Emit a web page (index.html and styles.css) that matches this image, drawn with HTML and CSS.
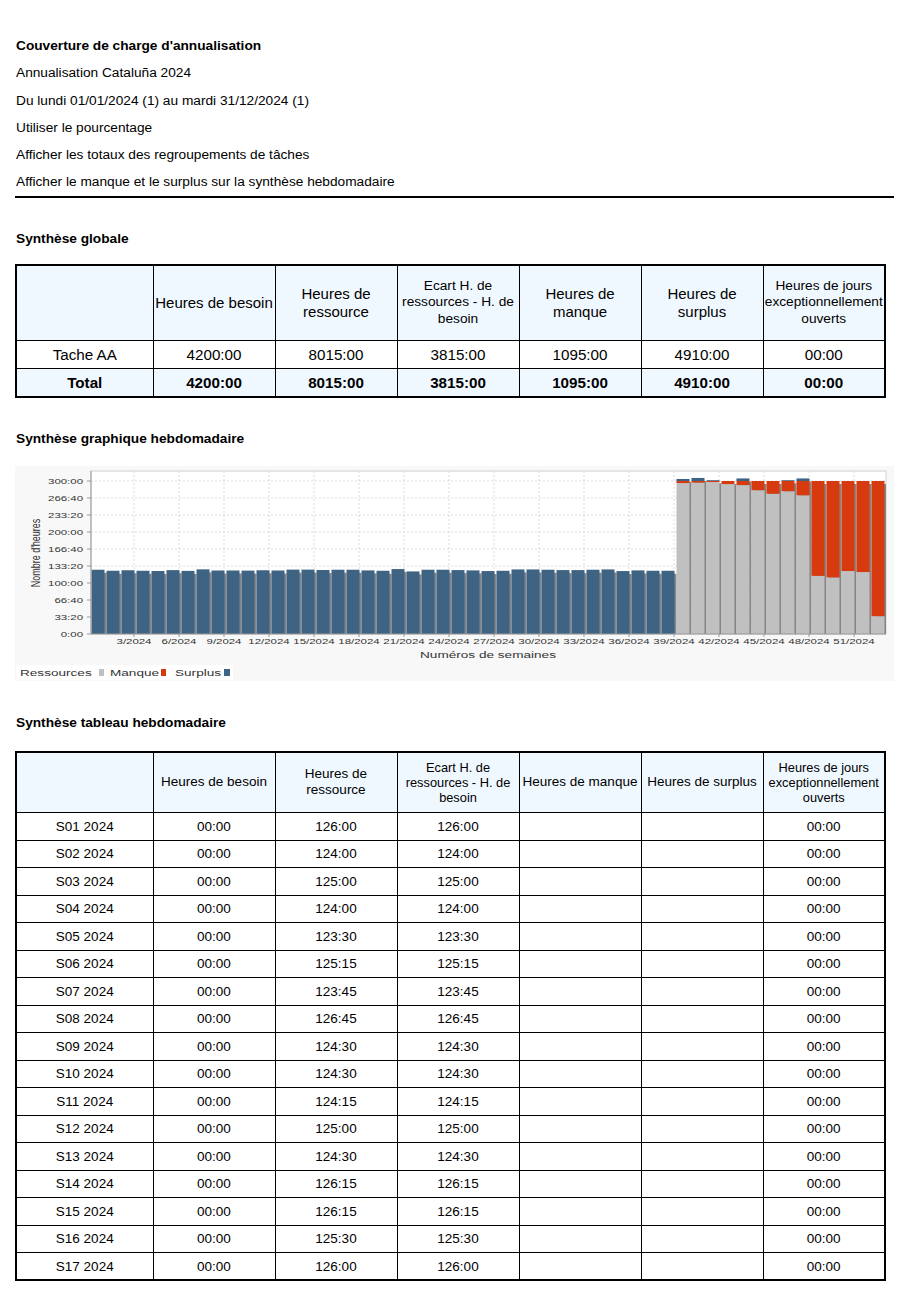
FILE: index.html
```html
<!DOCTYPE html>
<html lang="fr">
<head>
    <meta charset="UTF-8">
    <meta name="viewport" content="width=device-width, initial-scale=1.0">
    <title>Couverture de charge d'annualisation</title>
    <link rel="stylesheet" href="styles.css">
</head>
<body>
    <div class="page">
        <div class="params">
            <div class="param param-title">Couverture de charge d'annualisation</div>
            <div class="param">Annualisation Cataluña 2024</div>
            <div class="param">Du lundi 01/01/2024 (1) au mardi 31/12/2024 (1)</div>
            <div class="param">Utiliser le pourcentage</div>
            <div class="param">Afficher les totaux des regroupements de tâches</div>
            <div class="param">Afficher le manque et le surplus sur la synthèse hebdomadaire</div>
        </div>

        <h2 class="section-title">Synthèse globale</h2>
        <table class="summary summary-global">
            <colgroup>
                <col class="col-label">
                <col class="col-value"><col class="col-value"><col class="col-value">
                <col class="col-value"><col class="col-value"><col class="col-value">
            </colgroup>
            <thead>
                <tr>
                    <th></th>
                    <th>Heures de besoin</th>
                    <th>Heures de ressource</th>
                    <th class="small">Ecart H. de ressources - H. de besoin</th>
                    <th>Heures de manque</th>
                    <th>Heures de surplus</th>
                    <th class="small">Heures de jours exceptionnellement ouverts</th>
                </tr>
            </thead>
            <tbody>
                <tr>
                    <td>Tache AA</td>
                    <td>4200:00</td>
                    <td>8015:00</td>
                    <td>3815:00</td>
                    <td>1095:00</td>
                    <td>4910:00</td>
                    <td>00:00</td>
                </tr>
                <tr class="total">
                    <td>Total</td>
                    <td>4200:00</td>
                    <td>8015:00</td>
                    <td>3815:00</td>
                    <td>1095:00</td>
                    <td>4910:00</td>
                    <td>00:00</td>
                </tr>
            </tbody>
        </table>

        <h2 class="section-title title-chart">Synthèse graphique hebdomadaire</h2>
        <div class="chart">
            <svg id="chart" width="879" height="215" viewBox="0 0 879 215"></svg>
        </div>

        <h2 class="section-title title-weekly">Synthèse tableau hebdomadaire</h2>
        <table class="summary summary-weekly">
            <colgroup>
                <col class="col-label">
                <col class="col-value"><col class="col-value"><col class="col-value">
                <col class="col-value"><col class="col-value"><col class="col-value">
            </colgroup>
            <thead>
                <tr>
                    <th></th>
                    <th>Heures de besoin</th>
                    <th>Heures de ressource</th>
                    <th class="small">Ecart H. de ressources - H. de besoin</th>
                    <th>Heures de manque</th>
                    <th>Heures de surplus</th>
                    <th class="small">Heures de jours exceptionnellement ouverts</th>
                </tr>
            </thead>
            <tbody>
                <tr><td>S01 2024</td><td>00:00</td><td>126:00</td><td>126:00</td><td></td><td></td><td>00:00</td></tr>
                <tr><td>S02 2024</td><td>00:00</td><td>124:00</td><td>124:00</td><td></td><td></td><td>00:00</td></tr>
                <tr><td>S03 2024</td><td>00:00</td><td>125:00</td><td>125:00</td><td></td><td></td><td>00:00</td></tr>
                <tr><td>S04 2024</td><td>00:00</td><td>124:00</td><td>124:00</td><td></td><td></td><td>00:00</td></tr>
                <tr><td>S05 2024</td><td>00:00</td><td>123:30</td><td>123:30</td><td></td><td></td><td>00:00</td></tr>
                <tr><td>S06 2024</td><td>00:00</td><td>125:15</td><td>125:15</td><td></td><td></td><td>00:00</td></tr>
                <tr><td>S07 2024</td><td>00:00</td><td>123:45</td><td>123:45</td><td></td><td></td><td>00:00</td></tr>
                <tr><td>S08 2024</td><td>00:00</td><td>126:45</td><td>126:45</td><td></td><td></td><td>00:00</td></tr>
                <tr><td>S09 2024</td><td>00:00</td><td>124:30</td><td>124:30</td><td></td><td></td><td>00:00</td></tr>
                <tr><td>S10 2024</td><td>00:00</td><td>124:30</td><td>124:30</td><td></td><td></td><td>00:00</td></tr>
                <tr><td>S11 2024</td><td>00:00</td><td>124:15</td><td>124:15</td><td></td><td></td><td>00:00</td></tr>
                <tr><td>S12 2024</td><td>00:00</td><td>125:00</td><td>125:00</td><td></td><td></td><td>00:00</td></tr>
                <tr><td>S13 2024</td><td>00:00</td><td>124:30</td><td>124:30</td><td></td><td></td><td>00:00</td></tr>
                <tr><td>S14 2024</td><td>00:00</td><td>126:15</td><td>126:15</td><td></td><td></td><td>00:00</td></tr>
                <tr><td>S15 2024</td><td>00:00</td><td>126:15</td><td>126:15</td><td></td><td></td><td>00:00</td></tr>
                <tr><td>S16 2024</td><td>00:00</td><td>125:30</td><td>125:30</td><td></td><td></td><td>00:00</td></tr>
                <tr><td>S17 2024</td><td>00:00</td><td>126:00</td><td>126:00</td><td></td><td></td><td>00:00</td></tr>
            </tbody>
        </table>
    </div>

    <script>
        const NS = 'http://www.w3.org/2000/svg';
        const svg = document.getElementById('chart');

        // plot area, in chart coordinates
        const plot = { left: 76, top: 5, right: 871, bottom: 168 };
        const pxPerHour = 0.51;
        const stretch = 1.43;   // the chart image is drawn wider than tall

        const colors = {
            ressources: '#c0c0c0',
            manque: '#d83a10',
            surplus: '#3e6383',
            shadow: '#858585'
        };

        // weeks 1 to 39: surplus only
        const surplusWeeks = [
            126, 124, 125, 124, 123.5, 125.25, 123.75, 126.75, 124.5, 124.5,
            124.25, 125, 124.5, 126.25, 126.25, 125.5, 126, 126, 124.7, 124,
            127.3, 122.7, 126, 126, 125.3, 124.7, 123.4, 124, 126.6, 126.6,
            126, 125.3, 125.3, 126, 126.6, 123.4, 124.7, 124, 124
        ];

        // weeks 40 to 53: [ressources, manque, surplus]
        const stackedWeeks = [
            [296, 4, 4], [297, 3, 6], [298, 2, 1.5], [294, 6, 0], [292, 8, 5],
            [282, 18, 0], [275, 25, 0], [280, 20, 1.5], [272, 28, 5],
            [114, 186, 0], [111, 189, 0], [123.5, 176.5, 0], [121.5, 178.5, 0], [35, 265, 0]
        ];

        const weeks = surplusWeeks.map(h => [[h, colors.surplus]]).concat(
            stackedWeeks.map(w => [[w[0], colors.ressources], [w[1], colors.manque], [w[2], colors.surplus]])
        );

        function el(name, attrs, parent) {
            const node = document.createElementNS(NS, name);
            for (const key in attrs) node.setAttribute(key, attrs[key]);
            (parent || svg).appendChild(node);
            return node;
        }

        function label(text, x, y, size, anchor, extra) {
            const t = el('text', {
                transform: 'translate(' + x + ',' + y + ') scale(' + stretch + ',1)' + (extra || ''),
                'font-size': size,
                'text-anchor': anchor,
                class: 'chart-text'
            });
            t.textContent = text;
            return t;
        }

        function hhmm(hours) {
            const h = Math.floor(hours);
            const m = Math.round((hours - h) * 60);
            return h + ':' + (m < 10 ? '0' + m : m);
        }

        function y(hours) {
            return plot.bottom - hours * pxPerHour;
        }

        // background
        el('rect', { x: 0, y: 0, width: 879, height: 215, fill: '#f8f8f8' });
        el('rect', {
            x: plot.left, y: plot.top,
            width: plot.right - plot.left, height: plot.bottom - plot.top,
            fill: '#fff', stroke: '#d0d0d0'
        });

        // horizontal grid + y labels
        for (let i = 0; i <= 9; i++) {
            const hours = i * 100 / 3;
            const gy = y(hours);
            if (i > 0) {
                el('line', { x1: plot.left, x2: plot.right, y1: gy, y2: gy, class: 'grid' });
            }
            el('line', { x1: plot.left - 4, x2: plot.left, y1: gy, y2: gy, stroke: '#999' });
            label(hhmm(hours), 68, gy + 3, 8, 'end');
        }

        // vertical grid + x labels
        for (let n = 3; n <= 51; n += 3) {
            const gx = 74 + n * 15;
            el('line', { x1: gx, x2: gx, y1: plot.top, y2: plot.bottom, class: 'grid' });
            el('line', { x1: gx, x2: gx, y1: plot.bottom, y2: plot.bottom + 3, stroke: '#999' });
            label(n + '/2024', gx, 178, 8, 'middle');
        }

        // bars: shadows first, then the stacked segments
        const barWidth = 13;
        const clip = el('clipPath', { id: 'plot-clip' });
        el('rect', { x: plot.left, y: plot.top, width: plot.right - plot.left, height: plot.bottom - plot.top }, clip);
        const bars = el('g', { 'clip-path': 'url(#plot-clip)' });

        weeks.forEach((segments, i) => {
            const x = plot.left + 0.5 + i * 15;
            const total = segments.reduce((sum, s) => sum + s[0], 0);
            el('rect', {
                x: x + 2, y: y(total) + 3,
                width: barWidth, height: total * pxPerHour,
                fill: colors.shadow
            }, bars);
        });

        weeks.forEach((segments, i) => {
            const x = plot.left + 0.5 + i * 15;
            let base = 0;
            segments.forEach(s => {
                if (s[0] <= 0) return;
                el('rect', {
                    x: x, y: y(base + s[0]),
                    width: barWidth, height: s[0] * pxPerHour,
                    fill: s[1]
                }, bars);
                base += s[0];
            });
        });

        // axis lines
        el('line', { x1: plot.left, x2: plot.left, y1: plot.top, y2: plot.bottom, stroke: '#999' });
        el('line', { x1: plot.left, x2: plot.right, y1: plot.bottom, y2: plot.bottom, stroke: '#999' });

        // axis titles
        label('Numéros de semaines', 473, 191.5, 9.5, 'middle');
        label("Nombre d'heures", 25, 87, 9, 'middle', ' rotate(-90)');

        // legend
        el('rect', { x: 1, y: 199, width: 217, height: 15, fill: '#fff' });
        label('Ressources', 5, 210, 9.5, 'start');
        el('rect', { x: 84, y: 203, width: 5, height: 7, fill: colors.ressources });
        label('Manque', 95, 210, 9.5, 'start');
        el('rect', { x: 146, y: 203, width: 5, height: 7, fill: colors.manque });
        label('Surplus', 160, 210, 9.5, 'start');
        el('rect', { x: 209, y: 203, width: 6, height: 7, fill: colors.surplus });
    </script>
</body>
</html>
```

FILE: styles.css
```css
* {
    margin: 0;
    padding: 0;
    box-sizing: border-box;
}

body {
    background-color: #fff;
    color: #000;
    font-family: "Liberation Sans", Arial, sans-serif;
}

.page {
    padding: 32px 15px 40px 15px;
}

.params {
    border-bottom: 2px solid #000;
}

.param {
    height: 27.25px;
    line-height: 27.25px;
    font-size: 13.7px;
    padding-left: 1px;
}

.param-title {
    font-weight: bold;
}

.section-title {
    font-size: 13.7px;
    font-weight: bold;
    line-height: 16px;
    padding-left: 1px;
    margin: 33px 0 17px 0;
}

.title-chart {
    margin-bottom: 19px;
}

.title-weekly {
    margin: 34px 0 20px 0;
}

/* Tables */
.summary {
    border-collapse: collapse;
    table-layout: fixed;
    width: 871px;
    border: 2px solid #000;
    text-align: center;
}

.summary th,
.summary td {
    border: 1px solid #000;
    padding: 0;
    vertical-align: middle;
    font-weight: normal;
}

.summary thead th {
    background-color: #f0f8ff;
}

.col-label {
    width: 137px;
}

.col-value {
    width: 122px;
}

.summary-global th {
    height: 76px;
    font-size: 15px;
    line-height: 18px;
}

.summary-global th.small {
    font-size: 13.7px;
    line-height: 16.6px;
}

.summary-global td {
    height: 28px;
    font-size: 15.2px;
}

.summary-global .total td {
    font-weight: bold;
    background-color: #f0f8ff;
}

.summary-weekly th {
    height: 61px;
    font-size: 13.5px;
    line-height: 16px;
}

.summary-weekly th.small {
    font-size: 12.8px;
    line-height: 15px;
}

.summary-weekly td {
    height: 27.5px;
    font-size: 13.5px;
}

/* Chart */
.chart {
    width: 879px;
    height: 215px;
}

.chart svg {
    display: block;
}

.chart .grid {
    stroke: #dcdcdc;
    stroke-dasharray: 2 2;
}

.chart-text {
    fill: #333;
    font-family: "Liberation Sans", Arial, sans-serif;
}
```
